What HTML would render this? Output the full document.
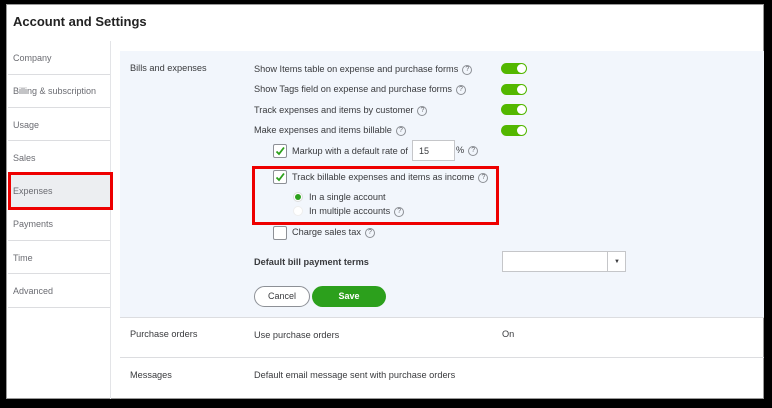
<!DOCTYPE html>
<html><head><style>
*{margin:0;padding:0;box-sizing:border-box}
body{width:772px;height:408px;background:#000;position:relative;overflow:hidden;font-family:"Liberation Sans",sans-serif;color:#393a3d}
#page{position:absolute;left:6px;top:4px;width:758px;height:395px;background:#fff;border:1px solid #999}
.a{position:absolute;white-space:nowrap}
.s{font-size:9px;color:#6b6c72}
.t{font-size:9.2px;color:#393a3d}
.tg{position:absolute;left:501px;width:26px;height:11px;border-radius:6px;background:#53b700}
.tg::after{content:"";position:absolute;right:1px;top:1px;width:9px;height:9px;border-radius:50%;background:#fff}
.cb{position:absolute;width:14px;height:14px;border:1px solid #8d9096;border-radius:2px;background:#fff}
.ck{position:absolute;width:14px;height:14px}
.q{display:inline-block;width:10px;height:10px;border:1px solid #8d9096;border-radius:50%;font-size:7px;line-height:8px;text-align:center;color:#6b6c72;vertical-align:middle;margin-left:4px}
.hr{position:absolute;height:1px;background:#dcdde0}
</style></head><body>
<div id="page"></div>
<div class="a" style="left:13px;top:14px;font-size:13px;font-weight:bold;color:#222">Account and Settings</div>
<div class="a" style="left:110px;top:41px;width:1px;height:358px;background:#e3e4e7"></div>
<div class="a" style="left:8px;top:173px;width:102px;height:34px;background:#eceef1"></div>
<div class="a s" style="left:13px;top:53px">Company</div>
<div class="hr" style="left:8px;top:74px;width:102px"></div>
<div class="a s" style="left:13px;top:86px">Billing &amp; subscription</div>
<div class="hr" style="left:8px;top:107px;width:102px"></div>
<div class="a s" style="left:13px;top:120px">Usage</div>
<div class="hr" style="left:8px;top:140px;width:102px"></div>
<div class="a s" style="left:13px;top:153px">Sales</div>
<div class="hr" style="left:8px;top:173px;width:102px"></div>
<div class="a s" style="left:13px;top:186px">Expenses</div>
<div class="hr" style="left:8px;top:207px;width:102px"></div>
<div class="a s" style="left:13px;top:219px">Payments</div>
<div class="hr" style="left:8px;top:240px;width:102px"></div>
<div class="a s" style="left:13px;top:253px">Time</div>
<div class="hr" style="left:8px;top:273px;width:102px"></div>
<div class="a s" style="left:13px;top:286px">Advanced</div>
<div class="hr" style="left:8px;top:307px;width:102px"></div>
<div class="a" style="left:8px;top:172px;width:105px;height:38px;border:3px solid #e00"></div>

<div class="a" style="left:120px;top:51px;width:644px;height:266px;background:#f2f6fc"></div>
<div class="a t" style="left:130px;top:63px">Bills and expenses</div>
<div class="a t" style="left:254px;top:64px">Show Items table on expense and purchase forms<span class="q">?</span></div>
<div class="a t" style="left:254px;top:84px">Show Tags field on expense and purchase forms<span class="q">?</span></div>
<div class="a t" style="left:254px;top:105px">Track expenses and items by customer<span class="q">?</span></div>
<div class="a t" style="left:254px;top:125px">Make expenses and items billable<span class="q">?</span></div>
<div class="tg" style="top:63px"></div><div class="tg" style="top:84px"></div><div class="tg" style="top:104px"></div><div class="tg" style="top:125px"></div>
<div class="cb" style="left:273px;top:144px"></div>
<svg class="ck" style="left:273px;top:144px" viewBox="0 0 14 14"><path d="M3.5 7.5 L6 10 L11 3.5" fill="none" stroke="#2ca01c" stroke-width="1.8"/></svg>
<div class="a t" style="left:292px;top:146px">Markup with a default rate of</div>
<div class="a" style="left:412px;top:140px;width:43px;height:21px;background:#fff;border:1px solid #c5c6c9;font-size:9px;padding:5px 0 0 6px">15</div>
<div class="a t" style="left:456px;top:145px">%<span class="q">?</span></div>
<div class="cb" style="left:273px;top:170px"></div>
<svg class="ck" style="left:273px;top:170px" viewBox="0 0 14 14"><path d="M3.5 7.5 L6 10 L11 3.5" fill="none" stroke="#2ca01c" stroke-width="1.8"/></svg>
<div class="a t" style="left:292px;top:172px">Track billable expenses and items as income<span class="q">?</span></div>
<div class="a" style="left:293px;top:192px;width:10px;height:10px;border-radius:50%;background:#fff;border:1px solid #ddd"></div>
<div class="a" style="left:295px;top:194px;width:6px;height:6px;border-radius:50%;background:#2ca01c"></div>
<div class="a t" style="left:309px;top:192px">In a single account</div>
<div class="a" style="left:293px;top:206px;width:10px;height:10px;border-radius:50%;background:#fff;border:1px solid #eee"></div>
<div class="a t" style="left:309px;top:206px">In multiple accounts<span class="q">?</span></div>
<div class="a" style="left:252px;top:166px;width:247px;height:59px;border:3px solid #e00"></div>
<div class="cb" style="left:273px;top:226px"></div>
<div class="a t" style="left:292px;top:227px">Charge sales tax<span class="q">?</span></div>
<div class="a t" style="left:254px;top:257px;font-weight:bold">Default bill payment terms</div>
<div class="a" style="left:502px;top:251px;width:124px;height:21px;background:#fff;border:1px solid #c5c6c9"></div>
<div class="a" style="left:607px;top:252px;width:1px;height:19px;background:#c5c6c9"></div>
<div class="a" style="left:614px;top:259px;font-size:6px;color:#393a3d">▼</div>
<div class="a" style="left:254px;top:286px;width:56px;height:21px;border:1px solid #8d9096;border-radius:11px;background:#fff;font-size:9px;text-align:center;line-height:19px">Cancel</div>
<div class="a" style="left:312px;top:286px;width:74px;height:21px;border-radius:11px;background:#2ca01c;color:#fff;font-weight:bold;font-size:9px;text-align:center;line-height:21px">Save</div>
<div class="hr" style="left:120px;top:317px;width:644px"></div>
<div class="a t" style="left:130px;top:329px">Purchase orders</div>
<div class="a t" style="left:254px;top:330px">Use purchase orders</div>
<div class="a t" style="left:502px;top:329px">On</div>
<div class="hr" style="left:120px;top:357px;width:644px"></div>
<div class="a t" style="left:130px;top:370px">Messages</div>
<div class="a t" style="left:254px;top:370px">Default email message sent with purchase orders</div>
</body></html>
